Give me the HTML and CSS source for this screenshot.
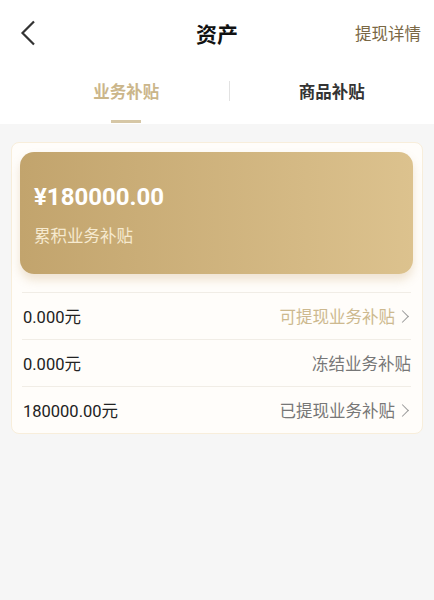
FILE: index.html
```html
<!DOCTYPE html>
<html>
<head>
	<meta charset="utf-8">
	<title>资产</title>
	<link rel="stylesheet" href="styles.css">
</head>
<body>
	<div class="top">
		<div class="header">
			<span class="back">
				<svg width="16" height="26" viewBox="0 0 16 26"><path d="M14 1.5 L2.5 13 L14 24.5" fill="none" stroke="#333" stroke-width="2.2"/></svg>
			</span>
			<span class="title">资产</span>
			<span class="detail">提现详情</span>
		</div>
		<div class="tabs">
			<div class="tab active">业务补贴</div>
			<div class="split"></div>
			<div class="tab">商品补贴</div>
		</div>
	</div>
	<div class="main">
		<div class="box">
			<div class="gold">
				<div class="money">¥180000.00</div>
				<div class="label">累积业务补贴</div>
			</div>
			<ul class="rows">
				<li>
					<span class="num">0.000元</span>
					<span class="name light">可提现业务补贴<i class="arrow"></i></span>
				</li>
				<li>
					<span class="num">0.000元</span>
					<span class="name">冻结业务补贴</span>
				</li>
				<li>
					<span class="num">180000.00元</span>
					<span class="name">已提现业务补贴<i class="arrow"></i></span>
				</li>
			</ul>
		</div>
	</div>
</body>
</html>
```

FILE: styles.css
```css
	*{
		box-sizing: border-box;
	}
	body{
		margin: 0;
		background: #f6f6f6;
		font-family: Roboto, "Noto Sans CJK SC", sans-serif;
		color: #222;
	}
	.top{
		background: #fff;
	}
	.header{
		height: 66px;
		display: flex;
		align-items: center;
		justify-content: space-between;
		padding: 0 13px 0 20px;
		position: relative;
	}
	.back{
		display: flex;
		width: 16px;
	}
	.title{
		position: absolute;
		left: 0;
		right: 0;
		text-align: center;
		font-size: 21px;
		font-weight: bold;
		color: #111;
		pointer-events: none;
	}
	.detail{
		font-size: 16.5px;
		color: #7a6845;
	}
	.tabs{
		height: 58px;
		display: flex;
		align-items: center;
		padding-left: 24px;
	}
	.tab{
		flex: 1;
		height: 100%;
		display: flex;
		align-items: center;
		justify-content: center;
		font-size: 16.5px;
		font-weight: bold;
		color: #333;
		padding-bottom: 8px;
		position: relative;
	}
	.tab.active{
		color: #cbb68a;
	}
	.tab.active:after{
		content: '';
		position: absolute;
		bottom: 1px;
		left: 50%;
		margin-left: -15px;
		width: 30px;
		height: 3px;
		background: #d6c7a6;
	}
	.split{
		width: 1px;
		height: 20px;
		margin-top: -8px;
		background: #e2e2e2;
	}
	.main{
		padding: 18px 11px;
	}
	.box{
		background: #fffdfa;
		border: 1px solid #f8eedb;
		border-radius: 8px;
		padding: 9px 9px 0 8px;
	}
	.gold{
		height: 122px;
		border-radius: 14px;
		background: linear-gradient(to right, #c2a46d, #dcc28e);
		box-shadow: 0 6px 10px rgba(190, 150, 90, 0.25);
		padding: 29px 14px 0;
	}
	.money{
		font-size: 24px;
		font-weight: bold;
		color: #fff;
		line-height: 32px;
	}
	.label{
		margin-top: 12px;
		font-size: 16.5px;
		color: #f6ead0;
		line-height: 24px;
	}
	.rows{
		list-style: none;
		margin: 18px 0 0;
		padding: 0 2px 0 2px;
	}
	.rows li{
		height: 47px;
		border-top: 1px solid #f1ede6;
		display: flex;
		align-items: center;
		justify-content: space-between;
		font-size: 16.5px;
	}
	.num{
		color: #222;
		margin-left: 1px;
	}
	.name{
		color: #777;
		display: flex;
		align-items: center;
	}
	.name.light{
		color: #cdb98f;
	}
	.arrow{
		display: inline-block;
		width: 9px;
		height: 9px;
		border-top: 1.5px solid #999;
		border-right: 1.5px solid #999;
		transform: rotate(45deg);
		margin: 0 4px 0 3px;
	}
```
